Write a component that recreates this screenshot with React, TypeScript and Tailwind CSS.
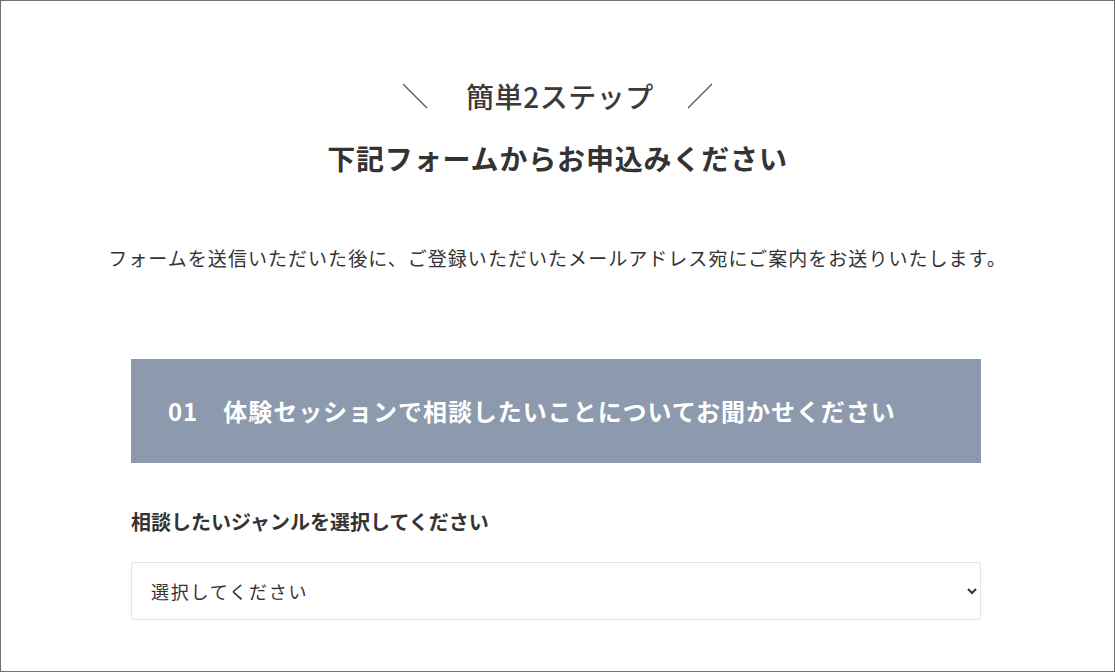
import React from "react";

const jp = { fontFamily: '"Noto Sans CJK JP", "Noto Sans", sans-serif' };

function Slash({ flip }: { flip?: boolean }) {
  return (
    <svg width="26" height="26" viewBox="0 0 26 26" className="shrink-0">
      {flip ? (
        <line x1="1" y1="25" x2="25" y2="1" stroke="#555" strokeWidth="1.3" />
      ) : (
        <line x1="1" y1="1" x2="25" y2="25" stroke="#555" strokeWidth="1.3" />
      )}
    </svg>
  );
}

export default function App() {
  return (
    <div
      className="h-screen w-full overflow-hidden border border-[#6f6f6f] bg-white text-[#333]"
      style={jp}
    >
      <div className="flex flex-col items-center pt-[75px]">
        {/* heading */}
        <div className="flex items-center">
          <Slash />
          <h2 className="ml-[38px] mr-[33px] text-[28px] font-medium leading-[40px] tracking-[0.02em] text-[#3a3a3a]">
            簡単2ステップ
          </h2>
          <Slash flip />
        </div>
        <h1 className="mt-[22px] text-[28px] font-bold leading-[40px] tracking-[0.03em] text-[#333]">
          下記フォームからお申込みください
        </h1>

        <p className="mt-[66px] text-[19px] leading-[28px] tracking-[0.055em] text-[#333]">
          フォームを送信いただいた後に、ご登録いただいたメールアドレス宛にご案内をお送りいたします。
        </p>
      </div>

      {/* form */}
      <div className="ml-[130px] mt-[87px] w-[850px]">
        <div className="flex h-[104px] items-center bg-[#8d9aad] px-[37px]">
          <h3 className="text-[24px] font-bold tracking-[0.04em] text-white">
            01<span className="ml-[25px]">体験セッションで相談したいことについてお聞かせください</span>
          </h3>
        </div>

        <label className="mt-[45px] block text-[20px] font-bold leading-[28px] text-[#333]">
          相談したいジャンルを選択してください
        </label>

        <select
          className="mt-[26px] block h-[58px] w-full rounded-[3px] border border-[#e4e4e4] bg-white pl-[15px] pr-[10px] text-[18px] tracking-[0.1em] text-[#333]"
          style={jp}
          defaultValue=""
        >
          <option value="">選択してください</option>
          <option value="career">キャリア</option>
          <option value="life">ライフ</option>
        </select>
      </div>
    </div>
  );
}
